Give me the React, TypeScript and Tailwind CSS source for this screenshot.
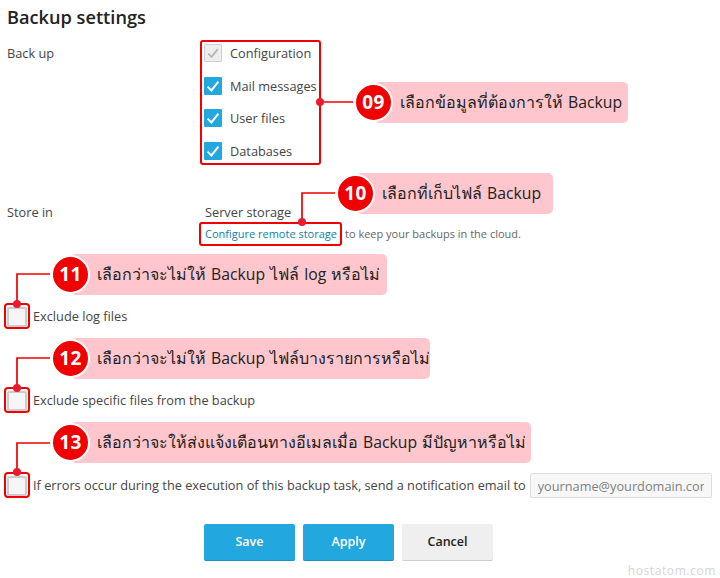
import React from 'react';

const Check = ({ color }: { color: string }) => (
  <svg viewBox="0 0 18 18" className="w-[18px] h-[18px]" fill="none">
    <path d="M3.6 9.6 L7.4 13.4 L14.4 4.6" stroke={color} strokeWidth="2" />
  </svg>
);

const CheckRow = ({ label, disabled }: { label: string; disabled?: boolean }) => (
  <div className="flex items-center h-[18px] gap-2">
    {disabled ? (
      <span className="w-[18px] h-[18px] bg-[#eeeeee] border border-[#cfcfcf] rounded-[1px] flex items-center justify-center">
        <Check color="#b5b5b5" />
      </span>
    ) : (
      <span className="w-[18px] h-[18px] bg-[#22a7de] rounded-[1px] flex items-center justify-center">
        <Check color="#ffffff" />
      </span>
    )}
    <span>{label}</span>
  </div>
);

const EmptyBox = () => <span className="w-5 h-5 shrink-0 bg-[#f6f6f6] border-2 border-[#cccccc] rounded-[2px]" />;

const Callout = ({ num, text, className, barClass }: { num: string; text: string; className: string; barClass: string }) => (
  <div className={`absolute h-[41px] ${className}`}>
    <div className={`h-[41px] ml-[19.5px] bg-[#ffc7cd] rounded-[5px] flex items-center pl-[26.5px] pt-[1px] text-[16px] text-[#222222] whitespace-nowrap font-['DejaVu_Sans','Noto_Sans',sans-serif] ${barClass}`}>
      <span className="whitespace-pre">
        {text.split(/([A-Za-z]+)/).map((part, i) =>
          /[A-Za-z]/.test(part) ? (
            <span key={i} className="font-['Open_Sans',sans-serif] text-[15.75px]">{part}</span>
          ) : (
            part
          )
        )}
      </span>
    </div>
    <div className="absolute left-0 top-[1px] w-[39px] h-[39px] rounded-full bg-[#f00000] border-2 border-white flex items-center justify-center text-white font-bold text-[19px] tracking-[0.5px] font-['Open_Sans',sans-serif]">
      {num}
    </div>
  </div>
);

export default function App() {
  return (
    <div className="relative w-[720px] h-[578px] overflow-hidden bg-white text-[#444444] text-[12.75px] font-['Open_Sans',sans-serif]">
      <div className="pt-[5px] px-[7px]">
        <h1 className="text-[18.2px] leading-[25px] font-semibold text-[#222222]">Backup settings</h1>

        <div className="flex mt-[14px]">
          <div className="w-[197px]">Back up</div>
          <div className="flex flex-col gap-[14.67px] leading-[18px]">
            <CheckRow label="Configuration" disabled />
            <CheckRow label="Mail messages" />
            <CheckRow label="User files" />
            <CheckRow label="Databases" />
          </div>
        </div>

        <div className="flex mt-[43px]">
          <div className="w-[198px] leading-[18px]">Store in</div>
          <div>
            <div className="leading-[18px]">Server storage</div>
            <div className="mt-[4px] text-[11px] leading-[18px] text-[#666666]">
              <span className="text-[#0b7fa8] font-medium">Configure remote storage</span>
              <span className="ml-[8px]">to keep your backups in the cloud.</span>
            </div>
          </div>
        </div>

        <div className="flex items-center gap-[6px] mt-[64px] h-5">
          <EmptyBox />
          <span>Exclude log files</span>
        </div>
        <div className="flex items-center gap-[6px] mt-[64px] h-5">
          <EmptyBox />
          <span>Exclude specific files from the backup</span>
        </div>
        <div className="flex items-center gap-[6px] mt-[65px] h-5">
          <EmptyBox />
          <span className="whitespace-nowrap">If errors occur during the execution of this backup task, send a notification email to</span>
          <input
            placeholder="yourname@yourdomain.com"
            className="ml-[-2px] w-[182px] h-[25px] shrink-0 bg-[#f7f7f7] border border-[#dddddd] rounded-[2px] px-[7px] text-[12.75px] placeholder:text-[#808080] outline-none"
          />
        </div>

        <div className="flex gap-2 ml-[197px] mt-[28px] font-semibold text-[12.5px]">
          <button className="w-[91px] h-[37px] bg-[#22a7de] border-b border-[#1b8fc0] text-white rounded-[2px]">Save</button>
          <button className="w-[91px] h-[37px] bg-[#22a7de] border-b border-[#1b8fc0] text-white rounded-[2px]">Apply</button>
          <button className="w-[91px] h-[37px] bg-[#efefef] border-b border-[#cccccc] text-[#222222] rounded-[2px]">Cancel</button>
        </div>
      </div>

      {/* annotations */}
      <div className="absolute left-[200px] top-[40px] w-[121px] h-[125px] border-2 border-[#f00000] rounded-[3px]" />
      <div className="absolute left-[199px] top-[222px] w-[143px] h-[24px] border-2 border-[#f00000] rounded-[3px]" />
      <div className="absolute left-[4px] top-[303px] w-[26px] h-[26px] border-2 border-[#f00000] rounded-[4px]" />
      <div className="absolute left-[4px] top-[387px] w-[26px] h-[26px] border-2 border-[#f00000] rounded-[4px]" />
      <div className="absolute left-[4px] top-[471.5px] w-[26px] h-[26px] border-2 border-[#f00000] rounded-[4px]" />

      <svg className="absolute left-0 top-0 pointer-events-none" width="720" height="578" fill="none" stroke="#f00000" strokeWidth="1.7">
        <path d="M320 102 H353" />
        <path d="M302 222 V193 H335" />
        <path d="M17 304 V274 H50" />
        <path d="M17 388 V358 H50" />
        <path d="M17 472 V443 H50" />
        <g fill="#e81c2e" stroke="none">
          <circle cx="320" cy="102" r="4" />
          <circle cx="302" cy="222" r="4" />
          <circle cx="17" cy="304" r="4" />
          <circle cx="17" cy="388" r="4" />
          <circle cx="17" cy="472" r="4" />
        </g>
      </svg>

      <Callout num="09" text="เลือกข้อมูลที่ต้องการให้ Backup" className="left-[354px] top-[82px]" barClass="w-[254px]" />
      <Callout num="10" text="เลือกที่เก็บไฟล์ Backup" className="left-[336px] top-[173px]" barClass="w-[197px]" />
      <Callout num="11" text="เลือกว่าจะไม่ให้ Backup ไฟล์ log หรือไม่" className="left-[51px] top-[254px]" barClass="w-[316.5px]" />
      <Callout num="12" text="เลือกว่าจะไม่ให้ Backup ไฟล์บางรายการหรือไม่" className="left-[51px] top-[338px]" barClass="w-[359.5px]" />
      <Callout num="13" text="เลือกว่าจะให้ส่งแจ้งเตือนทางอีเมลเมื่อ Backup มีปัญหาหรือไม่" className="left-[51px] top-[422px]" barClass="w-[460.5px]" />

      <div className="absolute right-[4px] top-[562px] text-[12px] tracking-[0.6px] text-[#d4d4d4]">hostatom.com</div>
    </div>
  );
}
